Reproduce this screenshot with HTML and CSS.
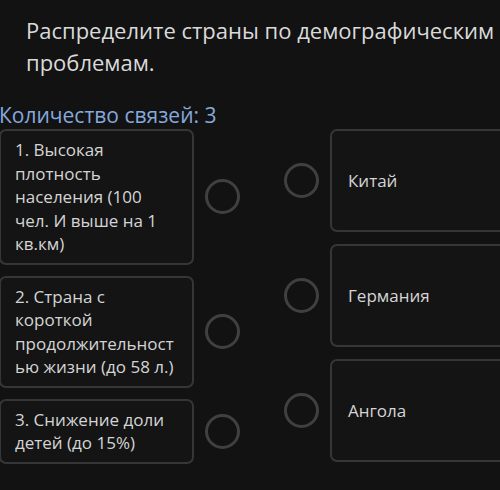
FILE: index.html
```html
<!DOCTYPE html>
<html lang="ru">
<head>
<meta charset="utf-8">
<link rel="stylesheet" href="styles.css">
</head>
<body>
<div class="page">
  <h1 class="title">Распределите страны по демографическим проблемам.</h1>
  <div class="count">Количество связей: 3</div>
  <div class="board">
    <div class="col col-left">
      <div class="row">
        <div class="card card-left">1. Высокая плотность населения (100 чел. И выше на 1 кв.км)</div>
        <div class="dot"></div>
      </div>
      <div class="row">
        <div class="card card-left">2. Страна с короткой продолжительностью жизни (до 58 л.)</div>
        <div class="dot"></div>
      </div>
      <div class="row">
        <div class="card card-left">3. Снижение доли детей (до 15%)</div>
        <div class="dot"></div>
      </div>
    </div>
    <div class="col col-right">
      <div class="row">
        <div class="dot"></div>
        <div class="card card-right">Китай</div>
      </div>
      <div class="row">
        <div class="dot"></div>
        <div class="card card-right">Германия</div>
      </div>
      <div class="row">
        <div class="dot"></div>
        <div class="card card-right">Ангола</div>
      </div>
    </div>
  </div>
</div>
</body>
</html>
```

FILE: styles.css
```css
html, body {
  margin: 0;
  padding: 0;
  background: #121212;
  height: 100%;
  overflow: hidden;
}
.page {
  font-family: "Open Sans", "Noto Sans", sans-serif;
  color: #d6d6d6;
  width: 500px;
  height: 490px;
  overflow: hidden;
}
.title {
  margin: 14px 0 0 26px;
  font-size: 22px;
  font-weight: 400;
  line-height: 32px;
  color: #dadada;
  width: 470px;
}
.count {
  margin-top: 23px;
  margin-left: -1px;
  font-size: 21px;
  line-height: 28px;
  color: #86a9de;
  white-space: nowrap;
}
.board {
  display: flex;
  align-items: flex-start;
}
.col {
  display: flex;
  flex-direction: column;
}
.col-left {
  width: 241px;
  gap: 11px;
}
.col-right {
  margin-left: 44px;
  gap: 12px;
}
.row {
  display: flex;
  align-items: center;
}
.col-left .row { gap: 11px; }
.col-right .row { gap: 11px; }
.card {
  box-sizing: border-box;
  background: #141414;
  border: 2px solid #363636;
  border-radius: 7px;
  font-size: 17px;
  line-height: 23.5px;
  color: #d4d4d4;
}
.card-left {
  width: 195px;
  padding: 7px 14px 7px 14px;
  margin-left: -1px;
  overflow-wrap: anywhere;
}
.card-right {
  width: 200px;
  height: 103px;
  padding: 0 16px;
  display: flex;
  align-items: center;
}
.dot {
  flex: none;
  box-sizing: border-box;
  width: 35px;
  height: 35px;
  border: 3px solid #404040;
  border-radius: 50%;
}
```
